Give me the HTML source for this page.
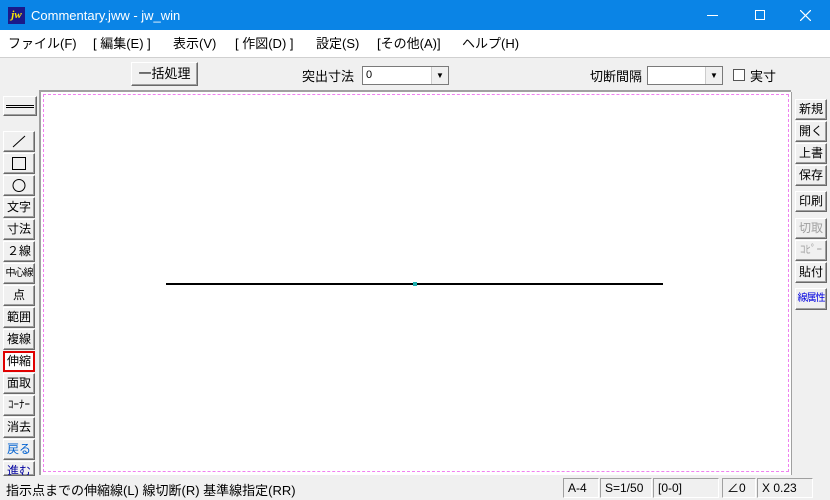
<!DOCTYPE html><html><head><meta charset="utf-8"><style>
*{box-sizing:border-box;margin:0;padding:0}
body{width:830px;height:500px;overflow:hidden;background:#f0f0f0;font-family:"Liberation Sans","Noto Sans CJK JP",sans-serif;position:relative;font-size:13px;color:#000}
.a{position:absolute}
.m{position:absolute;top:35px;font-size:13px;line-height:18px;white-space:pre}
.btn{position:absolute;background:#f0f0f0;border:1px solid;border-color:#fff #696969 #696969 #fff;box-shadow:inset -1px -1px 0 #a0a0a0;text-align:center;font-size:12px;line-height:19px;white-space:nowrap;overflow:hidden}
.lb{left:3px;width:32px;height:21px}
.rb{left:795px;width:32px;height:21px}
.sb{position:absolute;top:478px;height:20px;border:1px solid;border-color:#a0a0a0 #fff #fff #a0a0a0;font-size:12px;line-height:18px;padding-left:4px}
</style></head><body>
<div class="a" style="left:0;top:0;width:830px;height:30px;background:#0a84e6"></div>
<div class="a" style="left:8px;top:7px;width:17px;height:17px;background:#1a1a8a;color:#ffea00;font:bold italic 11px/17px 'Liberation Serif',serif;text-align:center">jw</div>
<div class="a" style="left:31px;top:7px;color:#fff;font-size:13px;line-height:17px">Commentary.jww - jw_win</div>
<div class="a" style="left:707px;top:15px;width:11px;height:1px;background:#fff"></div>
<div class="a" style="left:755px;top:10px;width:10px;height:10px;border:1px solid #fff"></div>
<svg class="a" style="left:800px;top:10px" width="11" height="11"><path d="M0 0L11 11M11 0L0 11" stroke="#fff" stroke-width="1.2"/></svg>
<div class="a" style="left:0;top:30px;width:830px;height:28px;background:#fff;border-bottom:1px solid #d0d0d0"></div>
<div class="m" style="left:8px">ファイル(F)</div>
<div class="m" style="left:93px">[ 編集(E) ]</div>
<div class="m" style="left:173px">表示(V)</div>
<div class="m" style="left:235px">[ 作図(D) ]</div>
<div class="m" style="left:316px">設定(S)</div>
<div class="m" style="left:377px">[その他(A)]</div>
<div class="m" style="left:462px">ヘルプ(H)</div>
<div class="btn" style="left:131px;top:62px;width:67px;height:24px;line-height:21px;font-size:13px">一括処理</div>
<div class="a" style="left:302px;top:66px;font-size:13px">突出寸法</div>
<div class="a" style="left:362px;top:66px;width:87px;height:19px;background:#fff;border:1px solid #7a7a7a;font-size:11px;padding-left:3px;line-height:17px">0</div>
<div class="a" style="left:431px;top:67px;width:17px;height:17px;background:#f0f0f0;border-left:1px solid #ccc;font-size:8px;text-align:center;line-height:17px">▼</div>
<div class="a" style="left:590px;top:66px;font-size:13px">切断間隔</div>
<div class="a" style="left:647px;top:66px;width:76px;height:19px;background:#fff;border:1px solid #7a7a7a"></div>
<div class="a" style="left:705px;top:67px;width:17px;height:17px;background:#f0f0f0;border-left:1px solid #ccc;font-size:8px;text-align:center;line-height:17px">▼</div>
<div class="a" style="left:733px;top:69px;width:12px;height:12px;background:#fff;border:1px solid #555"></div>
<div class="a" style="left:750px;top:66px;font-size:13px">実寸</div>
<div class="a" style="left:39px;top:90px;width:752px;height:385px;background:#fff;border-top:2px solid #a0a0a0;border-left:2px solid #a0a0a0"></div>
<div class="a" style="left:43px;top:94px;width:746px;height:378px;border:1px dashed #f080f0"></div>
<div class="a" style="left:166px;top:283px;width:497px;height:2px;background:#000"></div>
<div class="a" style="left:413px;top:282px;width:4px;height:4px;background:#20b0b0"></div>
<div class="btn" style="left:3px;top:96px;width:34px;height:20px"><div style="margin:8px 2px 0;height:3px;border-top:1px solid #000;border-bottom:1px solid #000"></div></div>
<div class="btn lb" style="top:131px"><svg width="30" height="19"><line x1="9" y1="15" x2="21" y2="4" stroke="#000"/></svg></div>
<div class="btn lb" style="top:153px"><svg width="30" height="19"><rect x="8.5" y="3.5" width="13" height="12" fill="none" stroke="#000"/></svg></div>
<div class="btn lb" style="top:175px"><svg width="30" height="19"><circle cx="15" cy="9.5" r="6" fill="none" stroke="#000"/></svg></div>
<div class="btn lb" style="top:197px">文字</div>
<div class="btn lb" style="top:219px">寸法</div>
<div class="btn lb" style="top:241px">２線</div>
<div class="btn lb" style="top:263px;font-size:10px;letter-spacing:-1px">中心線</div>
<div class="btn lb" style="top:285px">点</div>
<div class="btn lb" style="top:307px">範囲</div>
<div class="btn lb" style="top:329px">複線</div>
<div class="btn lb" style="top:351px;border:2px solid #e00000;box-shadow:none;background:#fff;line-height:17px">伸縮</div>
<div class="btn lb" style="top:373px">面取</div>
<div class="btn lb" style="top:395px;font-size:11px">ｺｰﾅｰ</div>
<div class="btn lb" style="top:417px">消去</div>
<div class="btn lb" style="top:439px;color:#0060d0">戻る</div>
<div class="btn lb" style="top:461px;color:#0000a0;height:15px">進む</div>
<div class="a" style="left:791px;top:92px;width:1px;height:383px;background:#a0a0a0"></div>
<div class="btn rb" style="top:99px">新規</div>
<div class="btn rb" style="top:121px">開く</div>
<div class="btn rb" style="top:143px">上書</div>
<div class="btn rb" style="top:165px">保存</div>
<div class="btn rb" style="top:191px">印刷</div>
<div class="btn rb" style="top:218px;color:#a0a0a0">切取</div>
<div class="btn rb" style="top:240px;color:#a0a0a0;font-size:11px">ｺﾋﾟｰ</div>
<div class="btn rb" style="top:262px">貼付</div>
<div class="btn rb" style="top:288px;color:#0000e0;font-size:10px;letter-spacing:-1px;height:22px">線属性</div>
<div class="a" style="left:0;top:476px;width:830px;height:24px;background:#f0f0f0"></div>
<div class="a" style="left:6px;top:480px;font-size:13px;white-space:pre">指示点までの伸縮線(L) 線切断(R) 基準線指定(RR)</div>
<div class="sb" style="left:563px;width:36px">A-4</div>
<div class="sb" style="left:600px;width:52px">S=1/50</div>
<div class="sb" style="left:653px;width:66px">[0-0]</div>
<div class="sb" style="left:722px;width:34px">∠0</div>
<div class="sb" style="left:757px;width:56px">X 0.23</div>
</body></html>
